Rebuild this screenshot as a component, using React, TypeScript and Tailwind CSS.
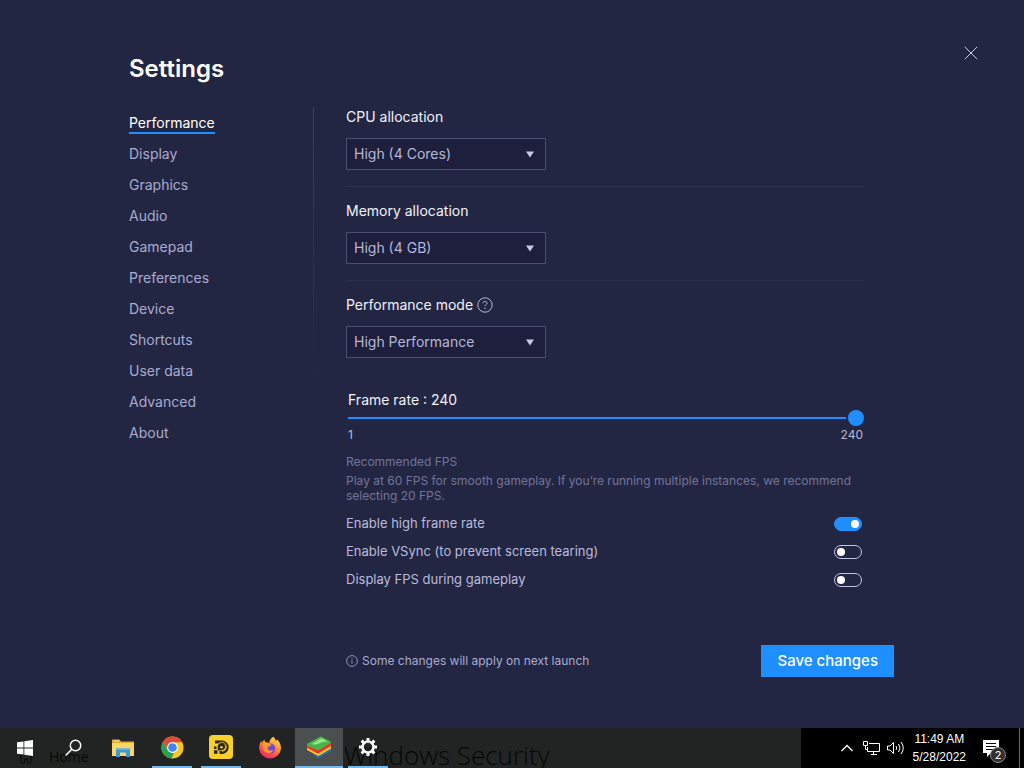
import { useState, type ReactNode } from "react";

const TABS = [
  "Performance",
  "Display",
  "Graphics",
  "Audio",
  "Gamepad",
  "Preferences",
  "Device",
  "Shortcuts",
  "User data",
  "Advanced",
  "About",
];

const MIN_FPS = 1;
const MAX_FPS = 240;

function SelectField({
  id,
  label,
  options,
  hint,
}: {
  id: string;
  label: string;
  options: string[];
  hint?: ReactNode;
}) {
  return (
    <div>
      <div className="flex h-5 items-center gap-1">
        <label htmlFor={id} className="text-sm text-[#f2f2fa]">
          {label}
        </label>
        {hint}
      </div>
      <div className="relative mt-[11px] w-[200px]">
        <select
          id={id}
          className="block h-8 w-full appearance-none border border-[#4b4d70] bg-[#1e1f3d] px-[7px] text-sm text-[#b5b7d8] outline-none focus-visible:border-[#1f8fff]"
        >
          {options.map((o) => (
            <option key={o}>{o}</option>
          ))}
        </select>
        <svg
          viewBox="0 0 10 7"
          className="pointer-events-none absolute top-[13px] right-[11px] h-[7px] w-[10px]"
          aria-hidden="true"
        >
          <path d="M1 0.5h8L5 6.5z" fill="#c5c8e8" />
        </svg>
      </div>
    </div>
  );
}

function Toggle({ id, label, defaultChecked }: { id: string; label: string; defaultChecked?: boolean }) {
  return (
    <div className="flex h-7 items-center justify-between pr-0.5">
      <label htmlFor={id} className="text-[13px] text-[#b9bbdc]">
        {label}
      </label>
      <input
        id={id}
        type="checkbox"
        role="switch"
        defaultChecked={defaultChecked}
        className="flex h-[14px] w-7 appearance-none items-center rounded-full border border-[#c5c7e2] px-0.5 before:block before:size-2 before:rounded-full before:bg-white checked:justify-end checked:border-[#1f8fff] checked:bg-[#1f8fff]"
      />
    </div>
  );
}

function TaskButton({
  label,
  state = "idle",
  children,
}: {
  label: string;
  state?: "idle" | "open" | "active";
  children: ReactNode;
}) {
  return (
    <button
      type="button"
      aria-label={label}
      className={`relative flex h-10 w-12 flex-col items-center ${state === "active" ? "bg-[#4b4f50]" : ""}`}
    >
      <span className="flex flex-1 items-center">{children}</span>
      {state !== "idle" && (
        <span className={`h-0.5 bg-[#76b9ed] ${state === "active" ? "w-full" : "w-10"}`} />
      )}
    </button>
  );
}

function WindowsIcon() {
  return (
    <svg viewBox="0 0 16 16" className="size-4" fill="#fff">
      <path d="M0 2.3 6.5 1.4V7.6H0zM7.3 1.3 16 0V7.6H7.3zM0 8.4H6.5V14.6L0 13.7zM7.3 8.4H16V16L7.3 14.7z" />
    </svg>
  );
}

function SearchIcon() {
  return (
    <svg viewBox="0 0 18 18" className="size-[18px]" fill="none" stroke="#fff" strokeWidth="1.5">
      <circle cx="10.5" cy="6.5" r="5.2" />
      <path d="M6.8 10.2.6 16.6" />
    </svg>
  );
}

function FolderIcon() {
  return (
    <svg viewBox="0 0 22 20" className="h-5 w-[22px]">
      <path d="M0 1.5h7.5l1.5 2h13V18H0z" fill="#e3a92f" />
      <path d="M0 5h22v13H0z" fill="#fbd768" />
      <path d="M2 2.5h5v1H2z" fill="#f9e7a6" />
      <path d="M4 10.5h14V19h-4v-4.5H8V19H4z" fill="#3f97d3" />
      <path d="M4 10.5h14v1.5H4z" fill="#62b3e6" />
    </svg>
  );
}

function ChromeIcon() {
  return (
    <svg viewBox="0 0 24 24" className="size-[23px]">
      <circle cx="12" cy="12" r="11.5" fill="#fbc723" />
      <path d="M12 .5A11.5 11.5 0 0 1 22 6.5H12L7.2 14.8 2 6.3A11.5 11.5 0 0 1 12 .5z" fill="#e0483a" />
      <path d="M2 6.3 7.2 14.8 12 17.5h1.500L11 23.500A11.500 11.500 0 0 1 2 6.300z" fill="#2ba14f" />
      <circle cx="12" cy="12" r="5.7" fill="#fff" />
      <circle cx="12" cy="12" r="4.5" fill="#4285f0" />
    </svg>
  );
}

function PlayerIcon() {
  return (
    <svg viewBox="0 0 24 24" className="size-6">
      <rect width="24" height="24" rx="4" fill="#f8d02e" />
      <path d="M6 7h7a5 5 0 0 1 0 10.500h-2.500" fill="none" stroke="#2b2617" strokeWidth="2.800" />
      <path d="M8.800 15.500V12.300a3.600 3.600 0 1 1 3.800 3z" fill="#2b2617" />
      <path d="M5 11.500h2.500V14H5zM5 15.300h3.500v3.500H5z" fill="#2b2617" />
      <circle cx="12.400" cy="12.200" r="1.300" fill="#f8d02e" />
      <path d="M9 9.500a4.500 4.500 0 1 1 4 6.700" fill="none" stroke="#f8d02e" strokeWidth="0.800" />
    </svg>
  );
}

function FirefoxIcon() {
  return (
    <svg viewBox="0 0 24 24" className="size-6">
      <defs>
        <linearGradient id="ff-body" x1="0.8" y1="0" x2="0.25" y2="1">
          <stop offset="0" stopColor="#ffdf4a" />
          <stop offset="0.45" stopColor="#ff8a2a" />
          <stop offset="0.8" stopColor="#f93b56" />
          <stop offset="1" stopColor="#e02a86" />
        </linearGradient>
      </defs>
      <path
        d="M15.5.8c1.2 1.3 2 2.5 2.4 4 .8-.4 1.2-1 1.4-1.4 2.4 2.400 4 5.600 3.700 9.600A11 11 0 0 1 1.200 13C1 9.800 1.800 6.800 3.200 4.800c.2 1 .5 1.500.9 2 .4-1.400 1.200-2.400 2.400-3.200 0 1 .3 1.900 1 2.600 1.300-.1 2.500.1 3.600.7.500-2.500 2-4.900 4.400-6.100z"
        fill="url(#ff-body)"
      />
      <circle cx="12.300" cy="12.600" r="5" fill="#7b45d8" />
      <path d="M5 8c2-1.800 4.500-1.500 6.500 0l2 .800c-.5 1.300-2 1.400-3.200 1.900-1 .5-1 2-.2 3 1.200 1.400 3.400 1 5.200.2-1 3.500-6.400 4.200-9 1.200C4.700 13.200 4.200 10 5 8z" fill="#ff9a2b" />
    </svg>
  );
}

function StacksIcon() {
  return (
    <svg viewBox="0 0 26 24" className="h-6 w-[26px]">
      <path d="M7 19 25 12.500v3.200L13.500 22.500q-1 .5-2 0z" fill="#2474b8" />
      <path d="M1 12.500 15 7l10 4v2.600L13.200 20.500q-1 .5-2 0L1 15z" fill="#f6c630" />
      <path d="M1 9 15 4l10 4v3L13 18.200q-1 .5-2 0L1 12.800z" fill="#e8392c" />
      <path d="M1.300 8.800 14 1.800q.8-.4 1.600 0L24.600 6.500q.8.500 0 1.200L13 15q-.8.500-1.600 0L1.300 10.500q-1-.9 0-1.700z" fill="#45b649" />
      <path d="M5.500 9 15.500 3.300l6.500 3.200q-5-.4-8.500 1.800T5.500 9z" fill="#9be08f" />
    </svg>
  );
}

function GearIcon() {
  return (
    <svg viewBox="0 0 20 20" className="size-5">
      <circle cx="10" cy="10" r="5.500" fill="none" stroke="#fff" strokeWidth="2.600" />
      <path
        d="M10 1v3M10 16v3M1 10h3M16 10h3M3.640 3.640l2.100 2.100M14.260 14.260l2.100 2.100M3.640 16.360l2.100-2.100M14.260 5.740l2.100-2.100"
        stroke="#fff"
        strokeWidth="3"
      />
    </svg>
  );
}

function Taskbar() {
  return (
    <footer className="flex h-10 shrink-0 justify-between overflow-hidden bg-[#222424]">
      <div className="relative flex gap-px pl-px">
        {/* window content showing through the translucent bar */}
        <svg viewBox="0 0 14 12" className="pointer-events-none absolute top-6 left-[19px] h-3 w-[14px]" fill="none" stroke="#080808">
          <path d="M1 4.500 7 1l6 3.500M2 4v7h3.500V7h3v4H12V4" />
        </svg>
        <span className="pointer-events-none absolute top-[19px] left-[49px] font-['Open_Sans',sans-serif] text-sm leading-5 text-[#080808]">
          Home
        </span>
        <span className="pointer-events-none absolute top-[11px] left-[344px] font-['Open_Sans',sans-serif] text-[26px] leading-8 font-light whitespace-nowrap text-[#060606]">
          Windows Security
        </span>

        <TaskButton label="Start">
          <WindowsIcon />
        </TaskButton>
        <TaskButton label="Search">
          <SearchIcon />
        </TaskButton>
        <TaskButton label="File Explorer">
          <FolderIcon />
        </TaskButton>
        <TaskButton label="Chrome" state="open">
          <ChromeIcon />
        </TaskButton>
        <TaskButton label="LDPlayer" state="open">
          <PlayerIcon />
        </TaskButton>
        <TaskButton label="Firefox">
          <FirefoxIcon />
        </TaskButton>
        <TaskButton label="BlueStacks" state="active">
          <StacksIcon />
        </TaskButton>
        <TaskButton label="Settings" state="open">
          <GearIcon />
        </TaskButton>
      </div>

      <div className="flex items-center bg-black pl-10 text-white">
        <button type="button" aria-label="Show hidden icons">
          <svg viewBox="0 0 12 8" className="h-2 w-3" fill="none" stroke="currentColor" strokeWidth="1.300">
            <path d="M.5 7 6 1.500 11.500 7" />
          </svg>
        </button>
        <svg viewBox="0 0 17 14" className="ml-[10px] h-[14px] w-[17px]" fill="none" stroke="currentColor">
          <path d="M6 2.500h10.500v8H4.500V6M8 13.500h6M10.500 10.500v3M.5.500h4v4h-4zM2.500 4.500v4h2" />
        </svg>
        <svg viewBox="0 0 18 14" className="ml-[7px] h-[14px] w-[18px]" fill="none" stroke="currentColor">
          <path d="M.5 5h2.500l3.500-3.500v11L3 9H.5zM9 5q1.500 2 0 4M11.500 3q3 4 0 8M14 1q4.500 6 0 12" />
        </svg>
        <time className="ml-2 text-center font-['Liberation_Sans',sans-serif] text-xs leading-[18px]">
          <span className="block">11:49 AM</span>
          <span className="block">5/28/2022</span>
        </time>
        <button type="button" aria-label="Notifications" className="relative ml-[15px] flex h-10 w-[38px] items-center">
          <svg viewBox="0 0 16 17" className="ml-0.5 h-[17px] w-4">
            <path d="M0 0h16v13H8l-4 4v-4H0z" fill="#fff" />
            <path d="M3 3.500h10M3 6.500h10M3 9.500h7" stroke="#000" />
          </svg>
          <span className="absolute top-[19px] left-[9px] flex size-4 items-center justify-center rounded-full border border-[#8a8a8a] bg-[#2f2f2f] text-[11px]">
            2
          </span>
        </button>
        <span className="mr-1 h-10 w-px bg-[#6b6b6b]" />
      </div>
    </footer>
  );
}

export default function App() {
  const [tab, setTab] = useState("Performance");
  const [fps, setFps] = useState(MAX_FPS);
  const pct = ((fps - MIN_FPS) / (MAX_FPS - MIN_FPS)) * 100;

  return (
    <div className="flex min-h-screen flex-col bg-[#232642] font-[Inter,sans-serif]">
      <main className="flex-1 pb-[51px]">
        <header className="flex items-start justify-between pt-[45px] pr-[45px] pl-[129px]">
          <h1 className="mt-2 text-2xl leading-8 font-semibold text-white">Settings</h1>
          <button type="button" aria-label="Close" className="flex size-4 items-center justify-center">
            <svg viewBox="0 0 14 14" className="size-[14px]" stroke="#c9cbe8">
              <path d="M.8.8l12.400 12.400M13.200.8.800 13.200" />
            </svg>
          </button>
        </header>

        <div className="flex pt-[22px] pr-[130px] pl-[129px]">
          <nav className="w-[184px] shrink-0">
            {TABS.map((t) => (
              <a
                key={t}
                href="#"
                onClick={(e) => {
                  e.preventDefault();
                  setTab(t);
                }}
                className="flex h-[31px] items-center text-sm leading-[18px]"
              >
                <span
                  className={
                    t === tab
                      ? "border-y-2 border-t-transparent border-b-[#1f8fff] text-white"
                      : "text-[#a9abd0]"
                  }
                >
                  {t}
                </span>
              </a>
            ))}
          </nav>
          <div className="h-[280px] w-px shrink-0 bg-linear-to-b from-[#3b3e5e] to-transparent" />

          <form className="min-w-0 flex-1 pl-8" onSubmit={(e) => e.preventDefault()}>
            <div className="pr-[30px]">
              <SelectField
                id="cpu"
                label="CPU allocation"
                options={["High (4 Cores)", "Medium (2 Cores)", "Low (1 Core)"]}
              />
              <hr className="mt-4 mb-[14px] border-[#2c2f4e]" />
              <SelectField
                id="memory"
                label="Memory allocation"
                options={["High (4 GB)", "Medium (2 GB)", "Low (1 GB)"]}
              />
              <hr className="mt-4 mb-[14px] border-[#2c2f4e]" />
              <SelectField
                id="mode"
                label="Performance mode"
                options={["High Performance", "Balanced", "Low memory"]}
                hint={
                  <svg viewBox="0 0 16 16" className="size-4" fill="none" stroke="#b5b7d8">
                    <circle cx="8" cy="8" r="7.200" />
                    <path d="M6 6.300c0-1.300.8-2 2-2s2 .7 2 1.800c0 1.500-2 1.500-2 3.100" />
                    <path d="M8 10.800v1.200" strokeWidth="1.200" />
                  </svg>
                }
              />

              <div className="mt-8 pl-0.5">
                <label htmlFor="fps" className="block text-sm leading-5 text-[#f2f2fa]">
                  Frame rate : {fps}
                </label>
                <input
                  id="fps"
                  type="range"
                  min={MIN_FPS}
                  max={MAX_FPS}
                  value={fps}
                  onChange={(e) => setFps(Number(e.target.value))}
                  className="block h-4 w-full appearance-none bg-size-[100%_2px] bg-center bg-no-repeat [&::-webkit-slider-thumb]:size-4 [&::-webkit-slider-thumb]:appearance-none [&::-webkit-slider-thumb]:rounded-full [&::-webkit-slider-thumb]:bg-[#1f8fff] [&::-webkit-slider-thumb]:shadow-[0_0_0_2px_#232642]"
                  style={{
                    backgroundImage: `linear-gradient(to right, #1f8fff ${pct}%, #4b4d70 ${pct}%)`,
                  }}
                />
                <div className="flex justify-between pr-px text-xs leading-[18px] text-[#b5b7d8]">
                  <span>{MIN_FPS}</span>
                  <span>{MAX_FPS}</span>
                </div>
              </div>

              <div className="mt-[10px] text-xs leading-[15px] text-[#71749a]">
                <h2>Recommended FPS</h2>
                <p className="mt-1">
                  Play at 60 FPS for smooth gameplay. If you’re running multiple instances, we recommend
                  selecting 20 FPS.
                </p>
              </div>

              <div className="mt-[7px]">
                <Toggle id="high-fps" label="Enable high frame rate" defaultChecked />
                <Toggle id="vsync" label="Enable VSync (to prevent screen tearing)" />
                <Toggle id="show-fps" label="Display FPS during gameplay" />
              </div>
            </div>

            <div className="mt-[51px] flex items-center justify-between">
              <p className="flex items-center gap-1 text-xs text-[#a9abd0]">
                <svg viewBox="0 0 12 12" className="size-3" fill="none" stroke="#a9abd0" strokeWidth="0.800">
                  <circle cx="6" cy="6" r="5.400" />
                  <path d="M6 5.200v3.600M6 3.200v1.100" />
                </svg>
                Some changes will apply on next launch
              </p>
              <button type="submit" className="h-8 bg-[#1f8fff] px-4 text-[15px] font-medium text-white">
                Save changes
              </button>
            </div>
          </form>
        </div>
      </main>
      <Taskbar />
    </div>
  );
}
